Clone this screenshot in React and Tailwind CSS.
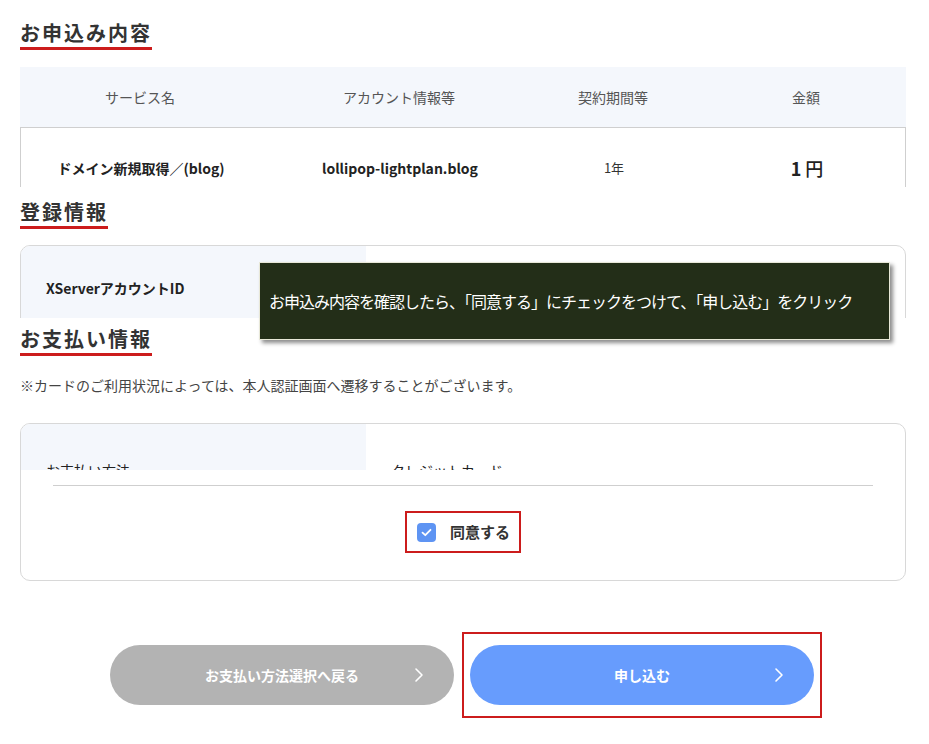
const jp = { fontFamily: '"Noto Sans CJK JP", "Noto Sans", sans-serif' }

function Heading({ children }) {
  return (
    <h2 className="inline-block border-b-[3px] border-[#cc1c1c] text-[20px] font-bold leading-[26px] tracking-[2px] text-[#333] pb-[1px]">
      {children}
    </h2>
  )
}

function Chevron() {
  return (
    <svg width="10" height="16" viewBox="0 0 10 16" fill="none">
      <path d="M2 2l6 6-6 6" stroke="white" strokeWidth="1.6" strokeLinecap="round" strokeLinejoin="round" />
    </svg>
  )
}

export default function App() {
  return (
    <div className="relative w-[929px] h-[744px] bg-white overflow-hidden text-[#333]" style={jp}>
      <div className="ml-5 w-[886px]">
        {/* お申込み内容 */}
        <div className="pt-[20px]">
          <Heading>お申込み内容</Heading>
        </div>
        <div className="mt-[17px] h-[120px] overflow-hidden">
          <div className="grid grid-cols-[240px_278px_150px_218px] h-[60px] bg-[#f4f7fc] items-center text-[14px] text-[#555] text-center">
            <div>サービス名</div>
            <div>アカウント情報等</div>
            <div>契約期間等</div>
            <div className="pl-[18px]">金額</div>
          </div>
          <div className="grid grid-cols-[240px_278px_150px_218px] h-[90px] border border-[#cfcfcf] items-center text-center pb-[30px]">
            <div className="text-[14px] font-bold text-[#222] pt-[22px]">ドメイン新規取得／(blog)</div>
            <div className="text-[14px] font-bold text-[#222] pt-[22px]">lollipop-lightplan.blog</div>
            <div className="text-[13px] text-[#333] pt-[22px]">1年</div>
            <div className="text-[18px] text-[#222] pl-[18px] pt-[22px]">
              <span className="font-bold">1</span> <span className="font-medium">円</span>
            </div>
          </div>
        </div>

        {/* 登録情報 */}
        <div className="mt-[12px]">
          <Heading>登録情報</Heading>
        </div>
        <div className="mt-[16px] h-[73px] overflow-hidden">
          <div className="h-[100px] flex border border-[#d8d8d8] rounded-[10px] overflow-hidden">
            <div className="w-[345px] bg-[#f4f7fc] pl-[25px] pt-[32px] text-[14px] font-bold text-[#222]">
              XServerアカウントID
            </div>
            <div className="flex-1" />
          </div>
        </div>

        {/* お支払い情報 */}
        <div className="mt-[8px]">
          <Heading>お支払い情報</Heading>
        </div>
        <p className="mt-[19px] text-[14px] text-[#444] leading-[20px]">
          ※カードのご利用状況によっては、本人認証画面へ遷移することがございます。
        </p>
        <div className="mt-[28px] h-[158px] border border-[#d8d8d8] rounded-[10px] overflow-hidden">
          <div className="h-[46px] overflow-hidden flex">
            <div className="w-[345px] bg-[#f4f7fc] pl-[25px] pt-[36px] text-[14px] text-[#222]">お支払い方法</div>
            <div className="pl-[25px] pt-[36px] text-[14px] text-[#222]">クレジットカード</div>
          </div>
          <div className="mx-[32px] mt-[15px] border-t border-[#cfcfcf]" />
          <div className="flex justify-center mt-[25px]">
            <div className="w-[116px] h-[42px] border-2 border-[#cc1c1c] flex items-center pl-[10px] gap-[14px]">
              <span className="w-[19px] h-[19px] rounded-[4px] bg-[#5e94f3] flex items-center justify-center">
                <svg width="11" height="9" viewBox="0 0 11 9" fill="none">
                  <path d="M1.5 4.6l2.8 2.6L9.5 1.8" stroke="white" strokeWidth="1.8" strokeLinecap="round" strokeLinejoin="round" />
                </svg>
              </span>
              <span className="text-[15px] font-bold text-[#333]">同意する</span>
            </div>
          </div>
        </div>

        {/* buttons */}
        <div className="mt-[51px] flex justify-center gap-[8px] pl-[6px]">
          <div className="pt-[13px]">
            <button className="w-[344px] h-[60px] rounded-full bg-[#b3b3b3] text-white text-[14px] font-bold relative flex items-center justify-center">
              お支払い方法選択へ戻る
              <span className="absolute right-[30px] top-[22px]"><Chevron /></span>
            </button>
          </div>
          <div className="border-2 border-[#cc1c1c] px-[6px] py-[11px]">
            <button className="w-[344px] h-[60px] rounded-full bg-[#679cfd] text-white text-[14px] font-bold relative flex items-center justify-center">
              申し込む
              <span className="absolute right-[30px] top-[22px]"><Chevron /></span>
            </button>
          </div>
        </div>
      </div>

      {/* tooltip overlay */}
      <div className="absolute left-[259px] top-[262px] w-[631px] h-[78px] bg-[#232e18] border border-[#e8e8d8] shadow-[3px_3px_4px_rgba(0,0,0,0.45)] flex items-center pl-[9px]">
        <span className="text-white text-[16px] tracking-[-1px]">
          お申込み内容を確認したら、「同意する」にチェックをつけて、「申し込む」をクリック
        </span>
      </div>
    </div>
  )
}
